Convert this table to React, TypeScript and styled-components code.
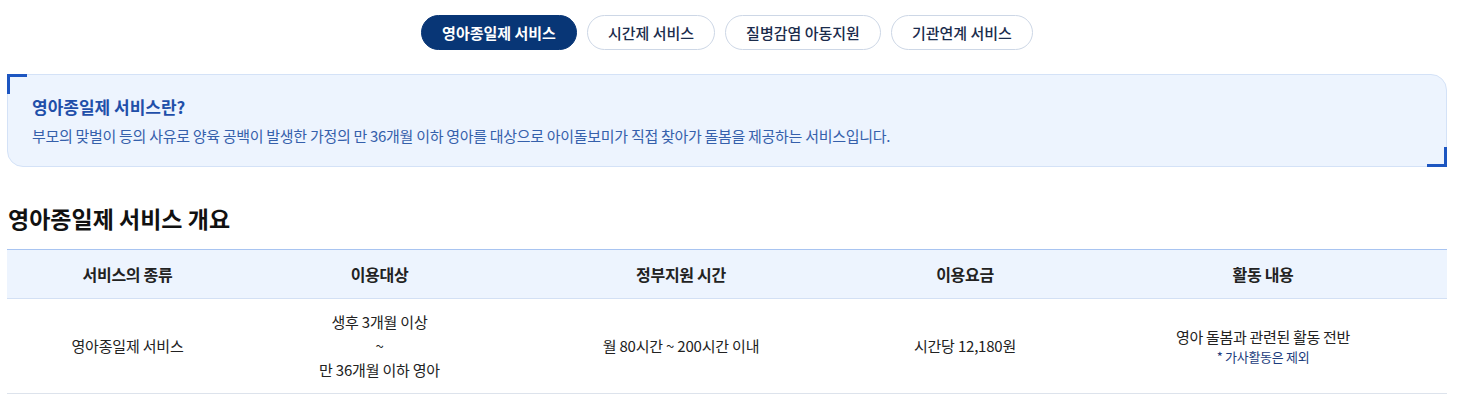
import React from "react";
import styled, { createGlobalStyle } from "styled-components";

const GlobalStyle = createGlobalStyle`
  * { box-sizing: border-box; }
  html, body { margin: 0; padding: 0; background: #ffffff; }
  body {
    font-family: "Noto Sans CJK KR", "Noto Sans", sans-serif;
    color: #222222;
  }
`;

const Page = styled.div`
  width: 1440px;
  margin-left: 7px;
  padding-top: 15px;
`;

const TabBar = styled.nav`
  display: flex;
  justify-content: center;
  gap: 10px;
`;

const Tab = styled.button<{ $active?: boolean }>`
  height: 35px;
  padding: 0 20px;
  border-radius: 18px;
  border: 1px solid ${(p) => (p.$active ? "#083676" : "#cdd7e6")};
  background: ${(p) => (p.$active ? "#083676" : "#ffffff")};
  color: ${(p) => (p.$active ? "#ffffff" : "#1b2c4c")};
  font-family: inherit;
  font-size: 15px;
  font-weight: ${(p) => (p.$active ? 700 : 500)};
  line-height: 33px;
  cursor: pointer;
  white-space: nowrap;
`;

const InfoBox = styled.section`
  position: relative;
  margin-top: 24px;
  padding: 20px 24px 19px;
  background: #edf4fe;
  border: 1px solid #d4e2f7;
  border-radius: 0 16px 0 16px;
`;

const Corner = styled.span<{ $pos: "tl" | "br" }>`
  position: absolute;
  width: 20px;
  height: 20px;
  border-color: #1d56c1;
  border-style: solid;
  ${(p) =>
    p.$pos === "tl"
      ? "top: -1px; left: -1px; border-width: 3px 0 0 3px;"
      : "bottom: -1px; right: -1px; border-width: 0 3px 3px 0;"}
`;

const InfoTitle = styled.h3`
  margin: 0;
  font-size: 17px;
  line-height: 24px;
  font-weight: 700;
  color: #1f4fa9;
`;

const InfoText = styled.p`
  margin: 6px 0 0;
  font-size: 15px;
  line-height: 22px;
  letter-spacing: -0.3px;
  color: #3560ab;
`;

const SectionTitle = styled.h2`
  margin: 36px 0 16px 1px;
  font-size: 23px;
  line-height: 30px;
  font-weight: 700;
  color: #111111;
`;

const Table = styled.table`
  width: 1440px;
  border-collapse: collapse;
  table-layout: fixed;
`;

const HeadRow = styled.tr`
  background: #edf4fe;
  border-top: 1px solid #a8c4f1;
  border-bottom: 1px solid #d3e0f4;
`;

const Th = styled.th`
  padding: 12px 10px;
  font-size: 16px;
  line-height: 24px;
  font-weight: 700;
  letter-spacing: -0.3px;
  color: #222222;
  text-align: center;
`;

const BodyRow = styled.tr`
  border-bottom: 1px solid #dde3ec;
`;

const Td = styled.td`
  padding: 11px 10px;
  font-size: 15px;
  line-height: 24px;
  letter-spacing: -0.2px;
  color: #222222;
  text-align: center;
  vertical-align: middle;
`;

const MainLine = styled.div`
  line-height: 22px;
  letter-spacing: -0.3px;
`;

const Note = styled.div`
  font-size: 13px;
  line-height: 18px;
  letter-spacing: -0.3px;
  color: #1b3c7c;
`;

const tabs = ["영아종일제 서비스", "시간제 서비스", "질병감염 아동지원", "기관연계 서비스"];
const cols = [241, 263, 340, 228, 368];
const heads = ["서비스의 종류", "이용대상", "정부지원 시간", "이용요금", "활동 내용"];

export default function App() {
  return (
    <>
      <GlobalStyle />
      <Page>
        <TabBar>
          {tabs.map((t, i) => (
            <Tab key={t} $active={i === 0}>
              {t}
            </Tab>
          ))}
        </TabBar>

        <InfoBox>
          <Corner $pos="tl" />
          <Corner $pos="br" />
          <InfoTitle>영아종일제 서비스란?</InfoTitle>
          <InfoText>
            부모의 맞벌이 등의 사유로 양육 공백이 발생한 가정의 만 36개월 이하 영아를 대상으로 아이돌보미가 직접 찾아가 돌봄을 제공하는 서비스입니다.
          </InfoText>
        </InfoBox>

        <SectionTitle>영아종일제 서비스 개요</SectionTitle>

        <Table>
          <colgroup>
            {cols.map((w, i) => (
              <col key={i} style={{ width: w }} />
            ))}
          </colgroup>
          <thead>
            <HeadRow>
              {heads.map((h) => (
                <Th key={h}>{h}</Th>
              ))}
            </HeadRow>
          </thead>
          <tbody>
            <BodyRow>
              <Td>영아종일제 서비스</Td>
              <Td>
                생후 3개월 이상
                <br />~<br />
                만 36개월 이하 영아
              </Td>
              <Td>월 80시간 ~ 200시간 이내</Td>
              <Td>시간당 12,180원</Td>
              <Td>
                <MainLine>영아 돌봄과 관련된 활동 전반</MainLine>
                <Note>* 가사활동은 제외</Note>
              </Td>
            </BodyRow>
          </tbody>
        </Table>
      </Page>
    </>
  );
}
